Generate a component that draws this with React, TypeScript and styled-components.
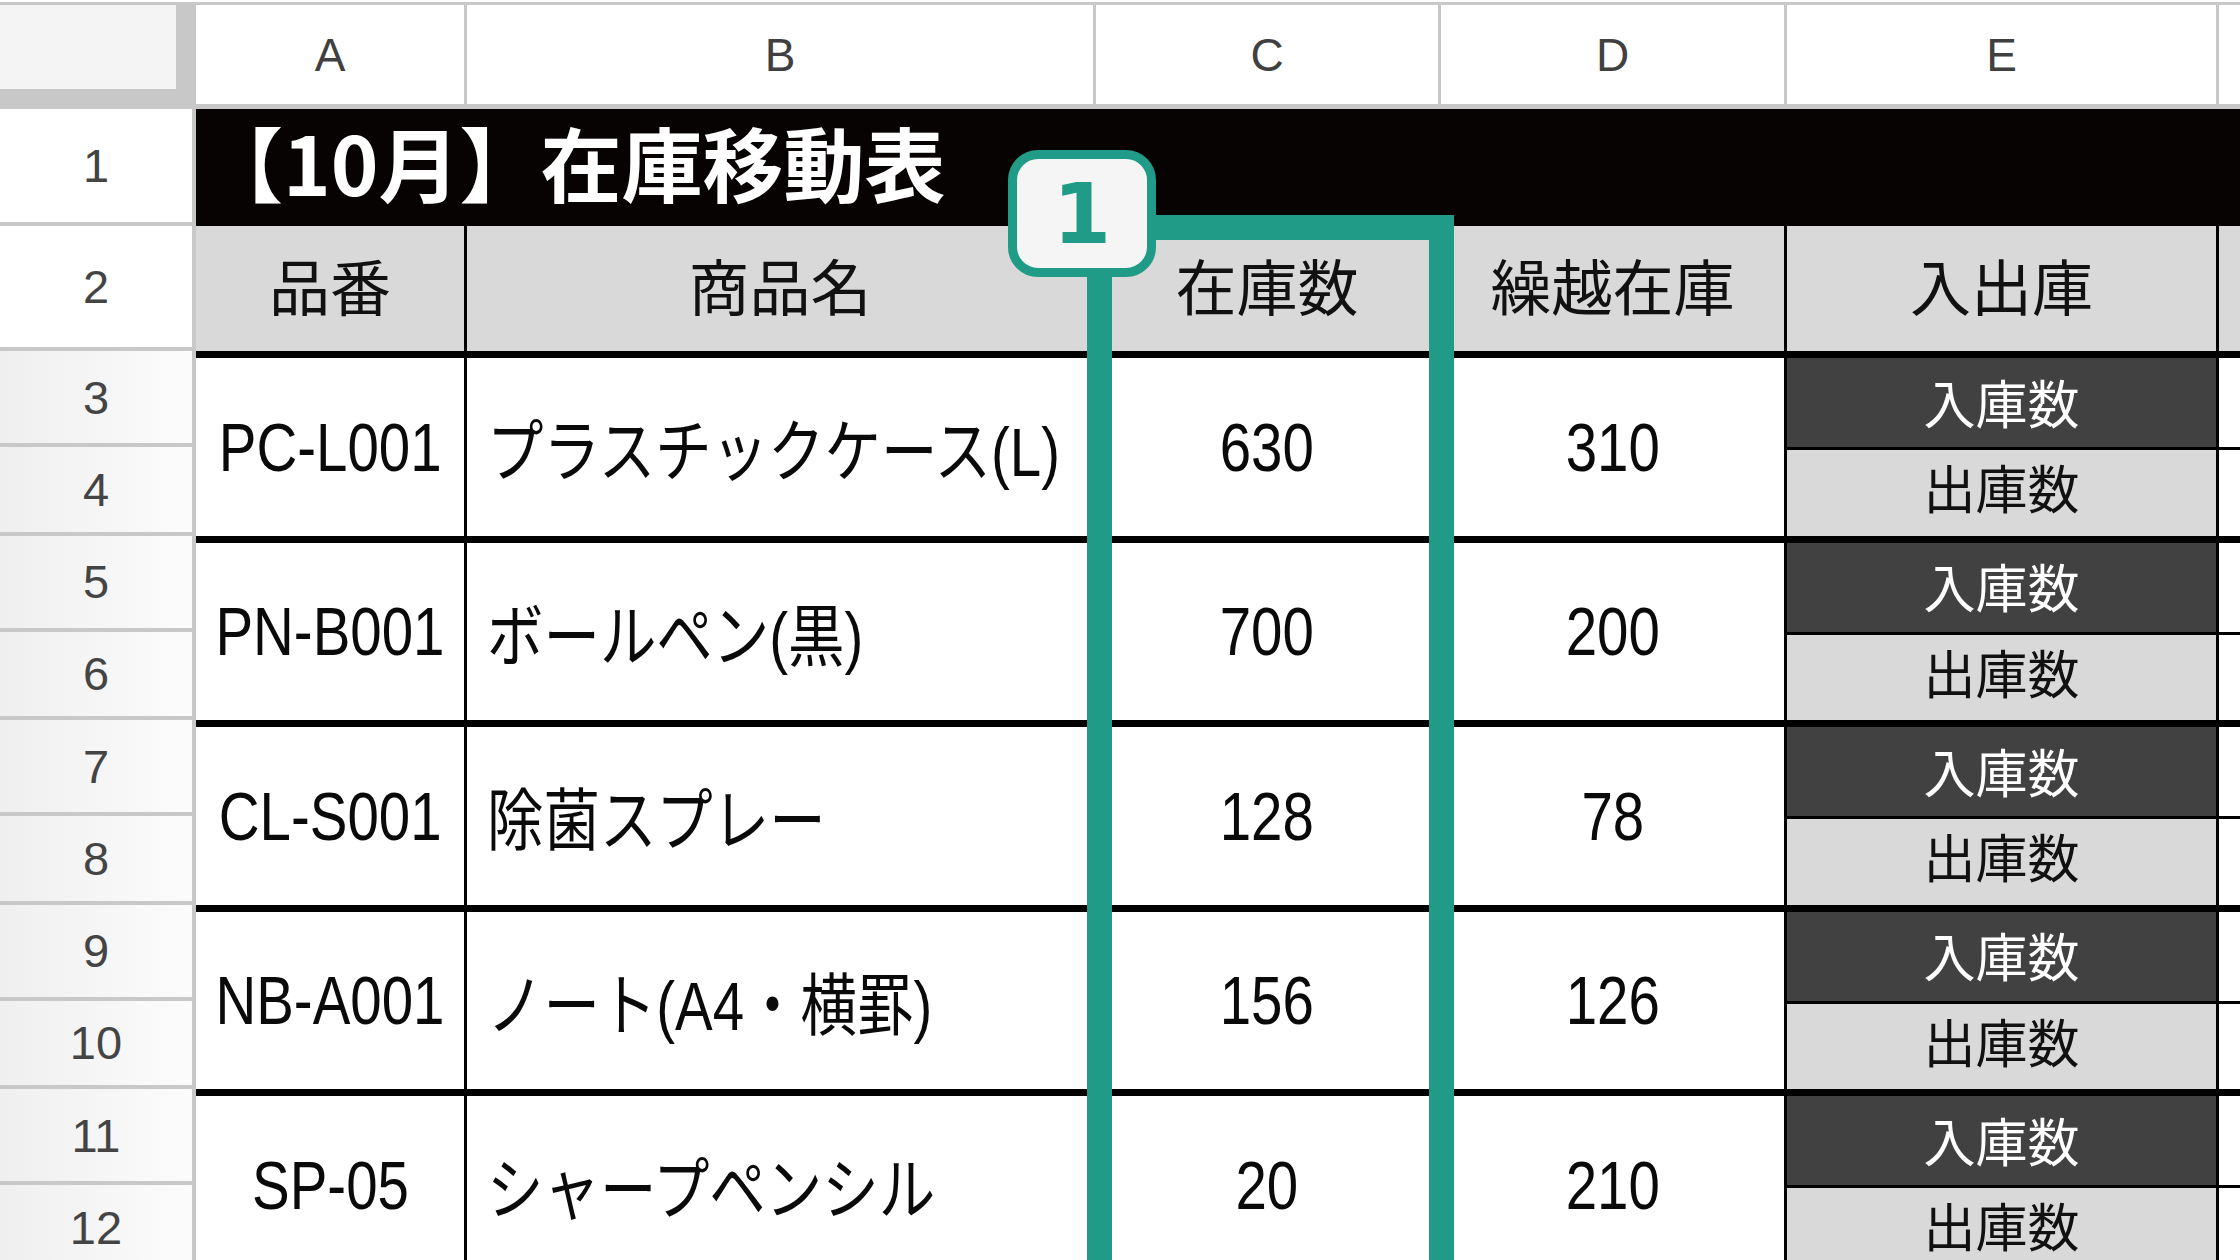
import React from "react";
import styled, { createGlobalStyle } from "styled-components";

const GRID = "#c8c8c8";
const TEAL = "#209b88";
const CJK = `"Noto Sans CJK JP", "Noto Sans", sans-serif`;
const LATIN = `"Liberation Sans", "Noto Sans CJK JP", sans-serif`;

const GlobalStyle = createGlobalStyle`
  *, *::before, *::after { box-sizing: border-box; }
  html, body { margin: 0; padding: 0; background: #fff; overflow: hidden; }
  #root { width: 2240px; height: 1260px; overflow: hidden; }
`;

const Sheet = styled.div`
  position: relative;
  display: grid;
  grid-template-columns: 196px 271px 629px 345px 346px 432px 1fr;
  grid-template-rows: 107px 117px 125px repeat(5, 96px 88.5px);
  margin-top: 2px;
`;

const Corner = styled.div`
  grid-column: 1;
  grid-row: 1;
  background: #f4f4f4;
  border-top: 3px solid ${GRID};
  border-right: 20px solid ${GRID};
  border-bottom: 20px solid ${GRID};
`;

const ColHead = styled.div<{ $last?: boolean }>`
  grid-row: 1;
  display: flex;
  align-items: center;
  justify-content: center;
  background: #fff;
  border-top: 3px solid ${GRID};
  border-bottom: 5px solid ${GRID};
  border-right: ${p => (p.$last ? "none" : `3px solid ${GRID}`)};
  font-family: ${LATIN};
  font-size: 46px;
  color: #404040;
`;

const RowNum = styled.div<{ $row: number; $plain?: boolean }>`
  grid-column: 1;
  grid-row: ${p => p.$row};
  display: flex;
  align-items: center;
  justify-content: center;
  background: ${p =>
    p.$plain ? "#fff" : "linear-gradient(to right, #efefef, #fcfcfc)"};
  border-right: 4px solid ${GRID};
  border-bottom: 4px solid ${GRID};
  font-family: ${LATIN};
  font-size: 47px;
  color: #444;
`;

const Title = styled.div`
  grid-column: 2 / -1;
  grid-row: 2;
  display: flex;
  align-items: center;
  padding-left: 6px;
  padding-bottom: 14px;
  background: #070303;
  color: #fff;
  font-family: ${CJK};
  font-weight: 700;
  font-size: 81px;
`;

const HeadCell = styled.div<{ $last?: boolean }>`
  grid-row: 3;
  display: flex;
  align-items: center;
  justify-content: center;
  padding-bottom: 8px;
  background: #d9d9d9;
  border-right: ${p => (p.$last ? "none" : "3px solid #000")};
  font-family: ${CJK};
  font-size: 61px;
  color: #111;
`;

const DataCell = styled.div<{ $row: number; $left?: boolean }>`
  grid-row: ${p => p.$row} / span 2;
  display: flex;
  align-items: center;
  justify-content: ${p => (p.$left ? "flex-start" : "center")};
  padding-left: ${p => (p.$left ? "20px" : "0")};
  background: #fff;
  border-top: 7px solid #000;
  border-right: 3px solid #000;
  overflow: hidden;
`;

const DataText = styled.span<{ $left?: boolean }>`
  display: inline-block;
  white-space: nowrap;
  font-family: ${LATIN};
  font-size: 68px;
  color: #0a0a0a;
  transform: scaleX(0.83);
  transform-origin: ${p => (p.$left ? "left center" : "center")};
`;

type Tone = "dark" | "light" | "blank";

const SubCell = styled.div<{ $row: number; $tone: Tone; $first?: boolean }>`
  grid-row: ${p => p.$row};
  display: flex;
  align-items: center;
  justify-content: center;
  padding-bottom: ${p => (p.$tone === "light" ? "12px" : "3px")};
  background: ${p =>
    p.$tone === "dark" ? "#414141" : p.$tone === "light" ? "#d9d9d9" : "#fff"};
  color: ${p => (p.$tone === "dark" ? "#fff" : "#111")};
  border-top: ${p => (p.$first ? "7px" : "3px")} solid #000;
  border-right: ${p => (p.$tone === "blank" ? "none" : "3px solid #000")};
  font-family: ${CJK};
  font-size: 52px;
`;

const Frame = styled.div`
  position: absolute;
  left: 1087px;
  top: 213px;
  width: 367px;
  height: 1100px;
  border: 25px solid ${TEAL};
  border-bottom: none;
  pointer-events: none;
`;

const Badge = styled.div`
  position: absolute;
  left: 1008px;
  top: 148px;
  width: 148px;
  height: 127px;
  display: flex;
  align-items: center;
  justify-content: center;
  background: #f5f5f5;
  border: 9px solid ${TEAL};
  border-radius: 30px;
  color: ${TEAL};
  font-family: "DejaVu Sans", sans-serif;
  font-weight: 700;
  font-size: 84px;
  line-height: 1;
`;

const columns = ["A", "B", "C", "D", "E", ""];
const headers = ["品番", "商品名", "在庫数", "繰越在庫", "入出庫", ""];

const items = [
  { code: "PC-L001", name: "プラスチックケース(L)", stock: "630", carry: "310" },
  { code: "PN-B001", name: "ボールペン(黒)", stock: "700", carry: "200" },
  { code: "CL-S001", name: "除菌スプレー", stock: "128", carry: "78" },
  { code: "NB-A001", name: "ノート(A4・横罫)", stock: "156", carry: "126" },
  { code: "SP-05", name: "シャープペンシル", stock: "20", carry: "210" },
];

const App: React.FC = () => {
  return (
    <>
      <GlobalStyle />
      <Sheet>
        <Corner />
        {columns.map((c, i) => (
          <ColHead key={`col-${i}`} $last={i === columns.length - 1}>
            {c}
          </ColHead>
        ))}

        {Array.from({ length: 12 }, (_, i) => (
          <RowNum key={`row-${i}`} $row={i + 2} $plain={i < 2}>
            {i + 1}
          </RowNum>
        ))}

        <Title>【10月】在庫移動表</Title>

        {headers.map((h, i) => (
          <HeadCell key={`head-${i}`} $last={i === headers.length - 1}>
            {h}
          </HeadCell>
        ))}

        {items.map((item, i) => {
          const row = 4 + i * 2;
          return (
            <React.Fragment key={item.code}>
              <DataCell $row={row}>
                <DataText>{item.code}</DataText>
              </DataCell>
              <DataCell $row={row} $left>
                <DataText $left>{item.name}</DataText>
              </DataCell>
              <DataCell $row={row}>
                <DataText>{item.stock}</DataText>
              </DataCell>
              <DataCell $row={row}>
                <DataText>{item.carry}</DataText>
              </DataCell>
              <SubCell $row={row} $tone="dark" $first>
                入庫数
              </SubCell>
              <SubCell $row={row} $tone="blank" $first />
              <SubCell $row={row + 1} $tone="light">
                出庫数
              </SubCell>
              <SubCell $row={row + 1} $tone="blank" />
            </React.Fragment>
          );
        })}

        <Frame />
        <Badge>1</Badge>
      </Sheet>
    </>
  );
};

export default App;
